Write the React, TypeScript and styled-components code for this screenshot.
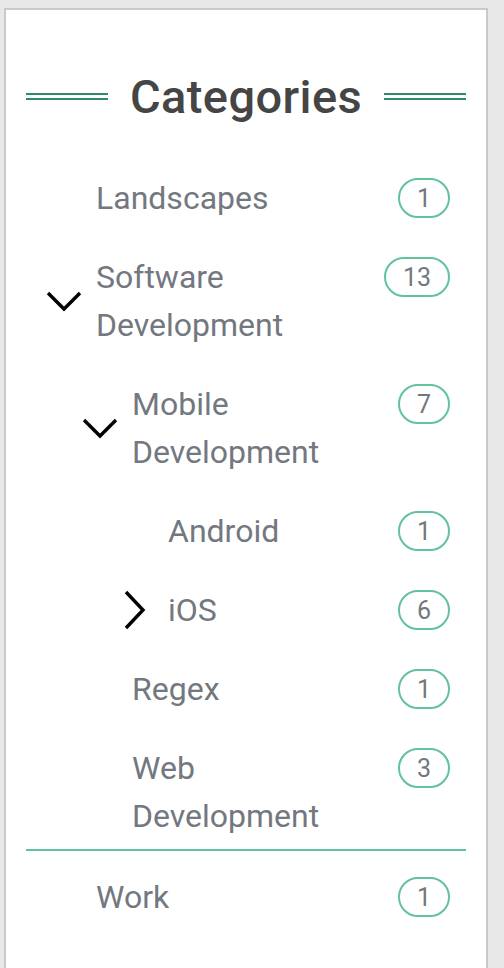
import React from "react";
import styled, { createGlobalStyle } from "styled-components";

const GlobalStyle = createGlobalStyle`
  html, body {
    margin: 0;
    padding: 0;
    background: #e8e8e8;
    font-family: Roboto, "Liberation Sans", sans-serif;
  }
`;

const Page = styled.div`
  padding: 8px 0 0 4px;
`;

const Card = styled.section`
  box-sizing: border-box;
  width: 484px;
  min-height: 980px;
  background: #ffffff;
  border: 2px solid #c9c9c9;
  padding: 59px 20px 40px;
`;

const Header = styled.div`
  display: flex;
  align-items: center;
  justify-content: space-between;
`;

const Rule = styled.span`
  box-sizing: border-box;
  width: 82px;
  height: 7px;
  border-top: 2px solid #2e8b64;
  border-bottom: 2px solid #2e8b64;
  flex: none;
`;

const Title = styled.h2`
  margin: 0;
  font-size: 47px;
  line-height: 55px;
  font-weight: 500;
  color: #454545;
  letter-spacing: 0.4px;
`;

const List = styled.div`
  margin-top: 28px;
  display: flex;
  flex-direction: column;
`;

const Row = styled.div<{ $level: number }>`
  display: flex;
  align-items: flex-start;
  padding: 22px 16px 9px ${(p) => p.$level * 36}px;
`;

const Toggle = styled.span`
  flex: none;
  width: 70px;
  align-self: stretch;
  display: flex;
  align-items: center;
  padding-left: 19px;
  box-sizing: border-box;
`;

const Label = styled.span`
  flex: 1;
  font-size: 32px;
  line-height: 48px;
  color: #737880;
  padding-right: 24px;
`;

const Badge = styled.span`
  flex: none;
  box-sizing: border-box;
  height: 40px;
  min-width: 50px;
  margin-top: 4px;
  padding: 0 17px;
  border: 2px solid #62c29d;
  border-radius: 20px;
  display: flex;
  align-items: center;
  justify-content: center;
  font-size: 25px;
  color: #737880;
`;

const Divider = styled.hr`
  margin: 0;
  border: none;
  height: 2px;
  background: #62c29d;
`;

const ChevronBox = styled.svg`
  display: block;
`;

type Chevron = "down" | "right" | null;

const ChevronIcon = ({ dir }: { dir: Chevron }) => {
  if (dir === "down")
    return (
      <ChevronBox width="40" height="24" viewBox="0 0 40 24">
        <polyline points="3,4 19,20 35,4" fill="none" stroke="#000" strokeWidth="3.4" />
      </ChevronBox>
    );
  if (dir === "right")
    return (
      <ChevronBox width="40" height="40" viewBox="0 0 40 40">
        <polyline points="9,2 26,20 9,38" fill="none" stroke="#000" strokeWidth="3.4" />
      </ChevronBox>
    );
  return null;
};

type Item = { label: string; count: number; level: number; chevron: Chevron; dividerAfter?: boolean };

const items: Item[] = [
  { label: "Landscapes", count: 1, level: 0, chevron: null },
  { label: "Software Development", count: 13, level: 0, chevron: "down" },
  { label: "Mobile Development", count: 7, level: 1, chevron: "down" },
  { label: "Android", count: 1, level: 2, chevron: null },
  { label: "iOS", count: 6, level: 2, chevron: "right" },
  { label: "Regex", count: 1, level: 1, chevron: null },
  { label: "Web Development", count: 3, level: 1, chevron: null, dividerAfter: true },
  { label: "Work", count: 1, level: 0, chevron: null },
];

export default function App() {
  return (
    <>
      <GlobalStyle />
      <Page>
        <Card>
          <Header>
            <Rule />
            <Title>Categories</Title>
            <Rule />
          </Header>
          <List>
            {items.map((it) => (
              <React.Fragment key={it.label}>
                <Row $level={it.level}>
                  <Toggle>
                    <ChevronIcon dir={it.chevron} />
                  </Toggle>
                  <Label>{it.label}</Label>
                  <Badge>{it.count}</Badge>
                </Row>
                {it.dividerAfter && <Divider />}
              </React.Fragment>
            ))}
          </List>
        </Card>
      </Page>
    </>
  );
}
